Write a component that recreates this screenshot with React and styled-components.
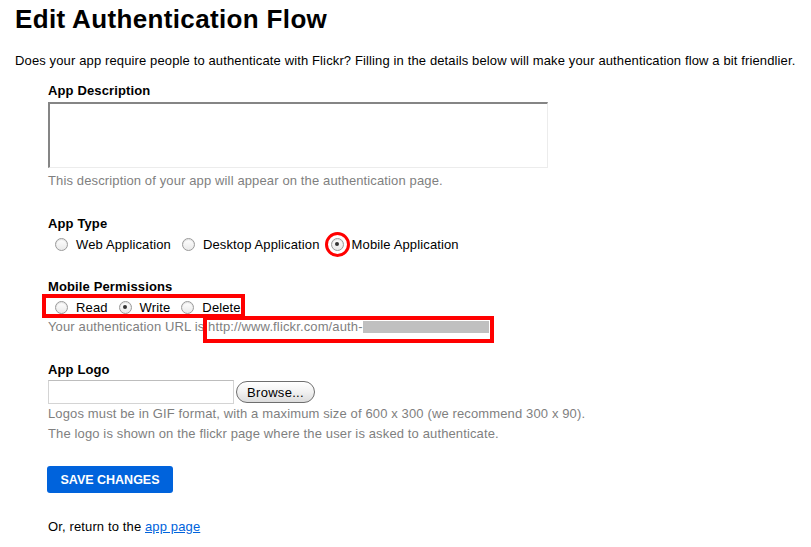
import styled, { createGlobalStyle } from "styled-components";

const GlobalStyle = createGlobalStyle`
  body {
    margin: 0;
    background: #fff;
    font-family: "Liberation Sans", Arial, sans-serif;
    color: #000;
  }
`;

const Page = styled.div`
  padding: 4px 15px 0 15px;
  font-size: 13px;
  letter-spacing: 0.13px;
`;

const Title = styled.h1`
  margin: 0;
  font-size: 26px;
  line-height: 30px;
  font-weight: bold;
  letter-spacing: 0.35px;
`;

const Intro = styled.p`
  margin: 19px 0 0;
  line-height: 16px;
`;

const Form = styled.form`
  padding-left: 33px;
`;

const Field = styled.div`
  margin-top: ${(p) => p.$gap}px;
`;

const Label = styled.div`
  font-weight: bold;
  line-height: 16px;
`;

const DescriptionBox = styled.textarea`
  display: block;
  box-sizing: border-box;
  margin-top: 3px;
  width: 500px;
  height: 66px;
  border: 1px solid #ececec;
  border-top: 2px solid #858585;
  border-left: 2px solid #858585;
  resize: none;
  padding: 2px;
`;

const Help = styled.div`
  color: #7f7f7f;
  line-height: ${(p) => p.$lh || 16}px;
  margin-top: ${(p) => p.$top || 0}px;
`;

const RadioRow = styled.div`
  display: flex;
  align-items: center;
  height: 20px;
  margin-top: 2px;
  padding-left: 7px;
`;

const RadioGroup = styled.div`
  position: relative;
  display: flex;
  align-items: center;
  gap: 11px;
`;

const Option = styled.label`
  position: relative;
  display: flex;
  align-items: center;
  gap: 8px;
`;

const Radio = styled.span`
  position: relative;
  display: inline-block;
  box-sizing: border-box;
  width: 13px;
  height: 13px;
  border-radius: 50%;
  border: 1px solid #9a9a9a;
  background: linear-gradient(#ffffff, #e9e9e9);
  box-shadow: inset 0 1px 1px rgba(0, 0, 0, 0.12);
  &::after {
    content: "";
    display: ${(p) => (p.$on ? "block" : "none")};
    position: absolute;
    left: 50%;
    top: 50%;
    width: 4px;
    height: 4px;
    margin: -2px 0 0 -2px;
    border-radius: 50%;
    background: #333;
  }
`;

const RingMark = styled.span`
  position: absolute;
  left: -7px;
  top: -7px;
  width: 25px;
  height: 25px;
  box-sizing: border-box;
  border: 3px solid #ff0000;
  border-radius: 50%;
`;

const BoxMark = styled.span`
  position: absolute;
  left: ${(p) => p.$l}px;
  right: ${(p) => p.$r}px;
  top: ${(p) => p.$t}px;
  bottom: ${(p) => p.$b}px;
  border: 4px solid #ff0000;
  pointer-events: none;
`;

const UrlLine = styled.div`
  color: #7f7f7f;
  line-height: 16px;
  margin-top: 2px;
`;

const Url = styled.span`
  position: relative;
  display: inline-flex;
  align-items: center;
`;

const Redacted = styled.span`
  display: inline-block;
  width: 126px;
  height: 12px;
  background: #c0c0c0;
`;

const FileRow = styled.div`
  display: flex;
  align-items: center;
  gap: 2px;
  margin-top: 2px;
`;

const FileBox = styled.span`
  display: block;
  box-sizing: border-box;
  width: 186px;
  height: 24px;
  border: 1px solid #d4d4d4;
  border-top-color: #bdbdbd;
`;

const BrowseButton = styled.button`
  box-sizing: border-box;
  height: 22px;
  width: 79px;
  padding: 0;
  border: 1px solid #6e6e6e;
  border-radius: 11px;
  background: linear-gradient(#ffffff, #f1f1f1 50%, #dcdcdc);
  font-family: "Liberation Sans", Arial, sans-serif;
  font-size: 13px;
  letter-spacing: 0.3px;
  color: #000;
`;

const SaveButton = styled.button`
  display: block;
  margin-top: 22px;
  margin-left: -1px;
  height: 27px;
  width: 126px;
  padding: 0;
  border: none;
  border-radius: 3px;
  background: #0063dc;
  color: #fff;
  font-family: "Liberation Sans", Arial, sans-serif;
  font-weight: bold;
  font-size: 12.5px;
`;

const Footer = styled.p`
  margin: 26px 0 0;
  line-height: 16px;
`;

const Link = styled.a`
  color: #0063dc;
  text-decoration: underline;
`;

export default function App() {
  return (
    <Page>
      <GlobalStyle />
      <Title>Edit Authentication Flow</Title>
      <Intro>
        Does your app require people to authenticate with Flickr? Filling in the
        details below will make your authentication flow a bit friendlier.
      </Intro>
      <Form>
        <Field $gap={14}>
          <Label>App Description</Label>
          <DescriptionBox />
          <Help $top={5}>This description of your app will appear on the authentication page.</Help>
        </Field>

        <Field $gap={27}>
          <Label>App Type</Label>
          <RadioRow>
            <RadioGroup>
              <Option>
                <Radio />
                Web Application
              </Option>
              <Option>
                <Radio />
                Desktop Application
              </Option>
              <Option>
                <Radio $on>
                  <RingMark />
                </Radio>
                Mobile Application
              </Option>
            </RadioGroup>
          </RadioRow>
        </Field>

        <Field $gap={25}>
          <Label>Mobile Permissions</Label>
          <RadioRow>
            <RadioGroup>
              <Option>
                <Radio />
                Read
              </Option>
              <Option>
                <Radio $on />
                Write
              </Option>
              <Option>
                <Radio />
                Delete
              </Option>
              <BoxMark $l={-13} $r={-4} $t={-6} $b={-3} />
            </RadioGroup>
          </RadioRow>
          <UrlLine>
            Your authentication URL is{" "}
            <Url>
              http://www.flickr.com/auth-
              <Redacted />
              <BoxMark $l={-5} $r={-5} $t={-3} $b={-8} />
            </Url>
          </UrlLine>
        </Field>

        <Field $gap={27}>
          <Label>App Logo</Label>
          <FileRow>
            <FileBox />
            <BrowseButton type="button">Browse...</BrowseButton>
          </FileRow>
          <Help $lh={20}>
            Logos must be in GIF format, with a maximum size of 600 x 300 (we recommend 300 x 90).
          </Help>
          <Help $lh={20}>
            The logo is shown on the flickr page where the user is asked to authenticate.
          </Help>
        </Field>

        <SaveButton type="button">SAVE CHANGES</SaveButton>

        <Footer>
          Or, return to the <Link href="#">app page</Link>
        </Footer>
      </Form>
    </Page>
  );
}
